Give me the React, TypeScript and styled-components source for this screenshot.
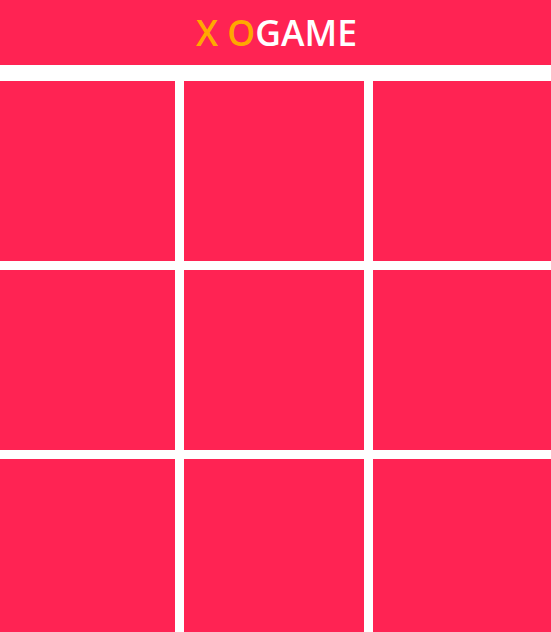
import React from "react";
import styled, { createGlobalStyle } from "styled-components";

const Global = createGlobalStyle`
  html, body { margin: 0; padding: 0; background: #ffffff; overflow: hidden; }
  body { font-family: "Open Sans", "Liberation Sans", sans-serif; }
`;

const Header = styled.header`
  height: 65px;
  background: #ff2353;
  display: flex;
  align-items: center;
  justify-content: center;
`;

const Title = styled.h1`
  margin: 0 0 0 2px;
  font-size: 35.5px;
  font-weight: 600;
  color: #ffffff;
  line-height: 1;
`;

const Mark = styled.span`
  color: #ffa800;
`;

const Board = styled.div`
  margin: 16px 0 0 -5px;
  width: 558px;
  display: grid;
  grid-template-columns: repeat(3, 180px);
  grid-auto-rows: 180px;
  gap: 9px;
`;

const Cell = styled.div`
  background: #ff2353;
`;

export default function App() {
  return (
    <>
      <Global />
      <Header>
        <Title>
          <Mark>X O</Mark>GAME
        </Title>
      </Header>
      <Board>
        {Array.from({ length: 9 }).map((_, i) => (
          <Cell key={i} />
        ))}
      </Board>
    </>
  );
}
